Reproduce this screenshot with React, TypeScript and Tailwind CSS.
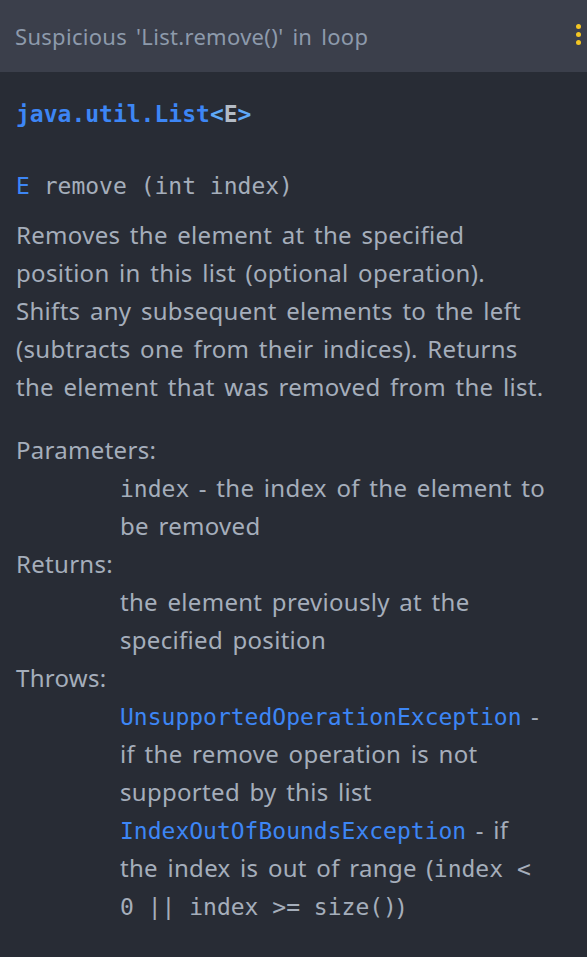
const sans = "font-['Noto_Sans','Open_Sans',sans-serif]";
const mono = "font-['DejaVu_Sans_Mono','Liberation_Mono',monospace]";

function Line({ children, indent = false }: { children: React.ReactNode; indent?: boolean }) {
  return <div className={`h-[38px] leading-[38px] whitespace-nowrap ${indent ? "pl-[104px]" : ""}`}>{children}</div>;
}

function Code({ children, blue = false }: { children: React.ReactNode; blue?: boolean }) {
  return (
    <span className={`${mono} text-[23px] tracking-normal [word-spacing:0] ${blue ? "text-[#3d86f5]" : ""}`}>
      {children}
    </span>
  );
}

export default function App() {
  return (
    <div className={`w-[587px] h-[957px] bg-[#282c35] ${sans} text-[#a5aebb] overflow-hidden`}>
      {/* header bar */}
      <div className="h-[72px] bg-[#3b3f4b] flex items-center justify-between pl-[15px] pr-[6px]">
        <span className="text-[22px] tracking-[0.3px] [word-spacing:3px] text-[#8d9aab]">
          Suspicious 'List.remove()' in loop
        </span>
        <div className="flex flex-col gap-[3px] -mt-[4px]">
          <span className="w-[5px] h-[5px] rounded-full bg-[#f3c623]" />
          <span className="w-[5px] h-[5px] rounded-full bg-[#f3c623]" />
          <span className="w-[5px] h-[5px] rounded-full bg-[#f3c623]" />
        </div>
      </div>

      <div className="px-4 pt-[23px] text-[24px] tracking-[0.3px] [word-spacing:3px]">
        <div className={`${mono} font-bold text-[23px] leading-[38px] tracking-normal [word-spacing:0] text-[#3d86f5]`}>
          java.util.List<span className="text-[#5fa9f8]">&lt;</span>
          <span className="text-[#b4bcc6]">E</span>
          <span className="text-[#5fa9f8]">&gt;</span>
        </div>

        <div className={`${mono} text-[23px] leading-[38px] tracking-normal [word-spacing:0] mt-[34px]`}>
          <span className="text-[#3d86f5]">E</span> remove (int index)
        </div>

        <div className="mt-[11px]">
          <Line>Removes the element at the specified</Line>
          <Line>position in this list (optional operation).</Line>
          <Line>Shifts any subsequent elements to the left</Line>
          <Line>(subtracts one from their indices). Returns</Line>
          <Line>the element that was removed from the list.</Line>
        </div>

        <div className="mt-[25px]">
          <Line>Parameters:</Line>
          <Line indent>
            <Code>index</Code> - the index of the element to
          </Line>
          <Line indent>be removed</Line>
          <Line>Returns:</Line>
          <Line indent>the element previously at the</Line>
          <Line indent>specified position</Line>
          <Line>Throws:</Line>
          <Line indent>
            <Code blue>UnsupportedOperationException</Code> -
          </Line>
          <Line indent>if the remove operation is not</Line>
          <Line indent>supported by this list</Line>
          <Line indent>
            <Code blue>IndexOutOfBoundsException</Code> - if
          </Line>
          <Line indent>
            the index is out of range (<Code>index &lt;</Code>
          </Line>
          <Line indent>
            <Code>0 || index &gt;= size()</Code>)
          </Line>
        </div>
      </div>
    </div>
  );
}
